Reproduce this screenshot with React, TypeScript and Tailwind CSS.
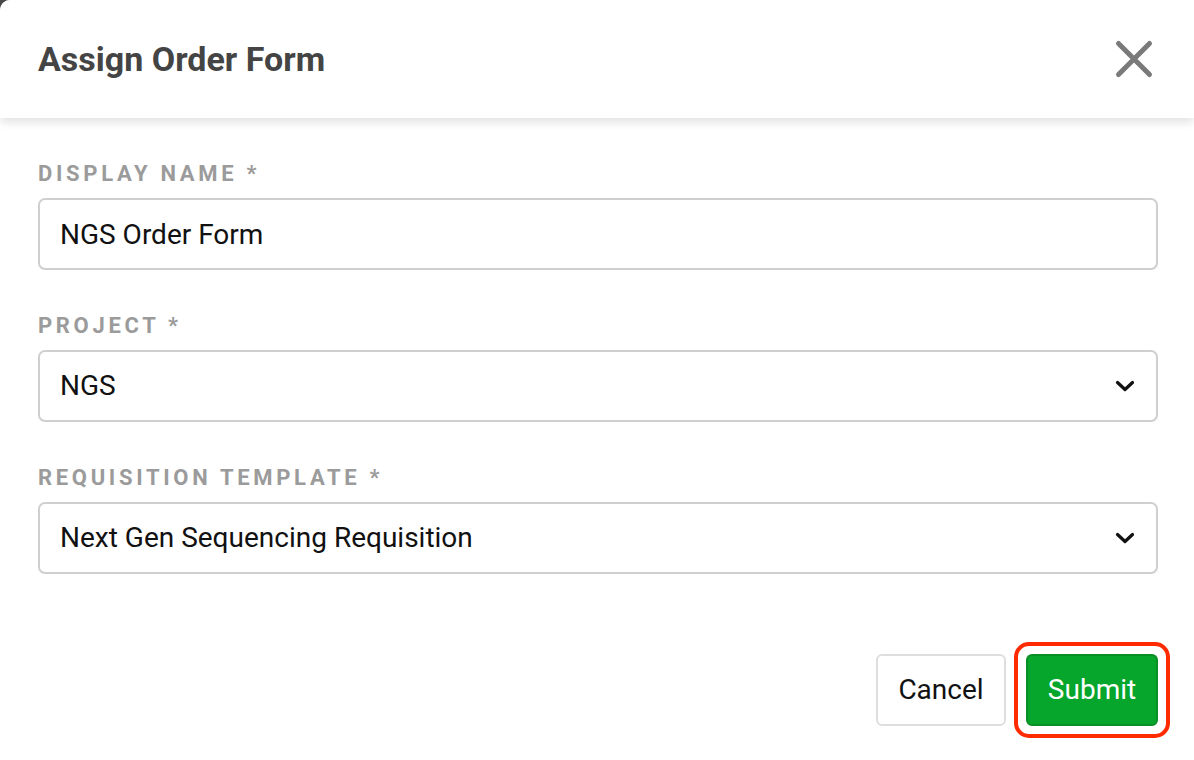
import { useState } from "react";

type FieldProps = {
  label: string;
  children: React.ReactNode;
};

function Field({ label, children }: FieldProps) {
  return (
    <div className="mb-[43px]">
      <label className="mb-[11px] block h-[26px] text-[22px] leading-[26px] font-bold uppercase tracking-[0.167em] text-[#9b9b9b]">
        {label} *
      </label>
      {children}
    </div>
  );
}

function Chevron() {
  return (
    <svg width="20" height="14" viewBox="0 0 20 14" fill="none">
      <path
        d="M2.5 3.5 L10 10.5 L17.5 3.5"
        stroke="#111"
        strokeWidth="3.2"
        strokeLinecap="round"
        strokeLinejoin="round"
      />
    </svg>
  );
}

type SelectBoxProps = {
  value: string;
};

function SelectBox({ value }: SelectBoxProps) {
  return (
    <div className="flex h-[72px] w-full items-center justify-between rounded-[7px] border-2 border-[#cfcfcf] bg-white pl-[20px] pr-[21px]">
      <span className="text-[28px] text-[#111]">{value}</span>
      <Chevron />
    </div>
  );
}

export default function App() {
  const [name, setName] = useState("NGS Order Form");

  return (
    <div className="h-[760px] w-[1194px] bg-[#4a4a4a] font-['Roboto','Liberation_Sans',sans-serif]">
      <div className="flex h-full w-full flex-col rounded-tl-[10px] bg-white">
        <div className="relative z-10 flex h-[118px] shrink-0 items-center justify-between rounded-tl-[10px] bg-white pl-[38px] pr-[40px] shadow-[0_4px_10px_rgba(0,0,0,0.12)]">
          <h2 className="text-[34px] font-bold text-[#444]">Assign Order Form</h2>
          <button type="button" className="flex h-[40px] w-[40px] items-center justify-center">
            <svg width="40" height="40" viewBox="0 0 40 40" fill="none">
              <path
                d="M4.5 4.5 L35.5 35.5 M35.5 4.5 L4.5 35.5"
                stroke="#7a7a7a"
                strokeWidth="5"
                strokeLinecap="round"
              />
            </svg>
          </button>
        </div>

        <form className="flex flex-col pl-[38px] pr-[36px] pt-[43px]" onSubmit={(e) => e.preventDefault()}>
          <Field label="Display Name">
            <input
              type="text"
              value={name}
              onChange={(e) => setName(e.target.value)}
              className="block h-[72px] w-full rounded-[7px] border-2 border-[#cfcfcf] px-[20px] text-[28px] text-[#111] outline-none"
            />
          </Field>

          <Field label="Project">
            <SelectBox value="NGS" />
          </Field>

          <Field label="Requisition Template">
            <SelectBox value="Next Gen Sequencing Requisition" />
          </Field>

          <div className="mt-[37px] flex justify-end gap-[20px]">
            <button
              type="button"
              className="h-[72px] w-[130px] rounded-[6px] border-2 border-[#dedede] bg-white text-[28px] text-[#111]"
            >
              Cancel
            </button>
            <div className="relative">
              <button
                type="submit"
                className="h-[72px] w-[132px] rounded-[6px] border-2 border-[#0a8f26] bg-[#05a62b] text-[28px] text-white"
              >
                Submit
              </button>
              <div className="pointer-events-none absolute -inset-[12px] rounded-[15px] border-4 border-[#ff2a00]" />
            </div>
          </div>
        </form>
      </div>
    </div>
  );
}
